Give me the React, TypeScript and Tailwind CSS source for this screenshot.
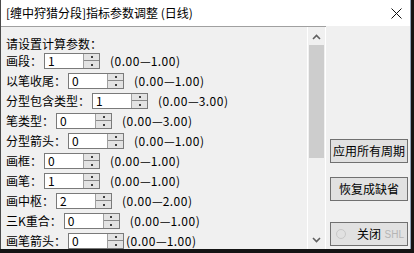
import React from "react";

const rows: [string, string, string, string][] = [
  ["画段：", "1", "(0.00", "1.00)"],
  ["以笔收尾：", "0", "(0.00", "1.00)"],
  ["分型包含类型：", "1", "(0.00", "3.00)"],
  ["笔类型：", "0", "(0.00", "3.00)"],
  ["分型箭头：", "0", "(0.00", "1.00)"],
  ["画框：", "0", "(0.00", "1.00)"],
  ["画笔：", "1", "(0.00", "1.00)"],
  ["画中枢：", "2", "(0.00", "2.00)"],
  ["三K重合：", "0", "(0.00", "1.00)"],
  ["画笔箭头：", "0", "(0.00", "1.00)"],
];

function Spin({ value }: { value: string }) {
  return (
    <div className="ml-[2px] h-[16px] flex border border-[#7a7a7a] shrink-0">
      <div className="w-[38px] bg-white pl-[3px] leading-[14px] text-[12px]">{value}</div>
      <div className="w-[16px] bg-[#e3e3e3] border-l border-[#a0a0a0] flex flex-col">
        <div className="h-[7px] border-b border-[#8a8a8a] flex items-center justify-center">
          <div className="w-[2px] h-[2px] bg-[#404040]" />
        </div>
        <div className="flex-1 flex items-center justify-center">
          <div className="w-[2px] h-[2px] bg-[#404040]" />
        </div>
      </div>
    </div>
  );
}

function Btn({ label, className, children }: { label: string; className: string; children?: React.ReactNode }) {
  return (
    <div
      className={`relative ml-[4px] w-[78px] h-[24px] border border-[#707070] bg-[#e1e1e1] flex items-center justify-center text-[12px] leading-none whitespace-nowrap ${className}`}
    >
      {label}
      {children}
    </div>
  );
}

export default function App() {
  return (
    <div className="w-[414px] h-[253px] bg-[#141414] overflow-hidden font-['Noto_Sans_CJK_SC',sans-serif] text-[12px] text-black">
      <div className="w-[411px] h-[249px] bg-[#f0f0f0] border-l border-l-[#4a4a4a] border-r border-r-[#8da2b8] flex flex-col overflow-hidden">
        <div className="h-[26px] bg-white flex items-center shrink-0">
          <span className="pl-[5px] text-[12px] leading-none whitespace-nowrap">[缠中狩猎分段]指标参数调整 (日线)</span>
          <svg className="ml-auto mr-[8px]" width="11" height="11" viewBox="0 0 11 11">
            <path d="M0.5 0.5 L10.5 10.5 M10.5 0.5 L0.5 10.5" stroke="#111" strokeWidth="1" fill="none" />
          </svg>
        </div>
        <div className="flex flex-1 min-h-0">
          <div className="w-[325px] flex border-t border-[#a0a0a0] overflow-hidden">
            <div className="flex-1 pt-[9px] overflow-hidden">
              <div className="h-[15px] leading-[15px] pl-[5px] whitespace-nowrap">请设置计算参数：</div>
              {rows.map(([label, v, a, b], i) => (
                <div key={i} className="h-[20px] flex items-center pl-[5px] whitespace-nowrap">
                  <span className="leading-none">{label}</span>
                  <Spin value={v} />
                  <span className={`${i === rows.length - 1 ? "ml-[2px]" : "ml-[10px]"} leading-none tracking-[0.5px]`}>
                    {a}
                    <span className="tracking-normal">—</span>
                    {b}
                  </span>
                </div>
              ))}
            </div>
            <div className="w-[19px] border-l border-r border-white bg-[#f0f0f0] flex flex-col items-center">
              <svg className="mt-[7px]" width="9" height="6" viewBox="0 0 9 6">
                <path d="M1 5 L4.5 1.5 L8 5" stroke="#606060" strokeWidth="1.6" fill="none" />
              </svg>
              <div className="mt-[5px] w-[15px] h-[113px] bg-[#cdcdcd]" />
              <div className="flex-1" />
              <svg className="mb-[6px]" width="9" height="6" viewBox="0 0 9 6">
                <path d="M1 1 L4.5 4.5 L8 1" stroke="#606060" strokeWidth="1.6" fill="none" />
              </svg>
            </div>
          </div>
          <div className="flex-1 flex flex-col">
            <Btn label="应用所有周期" className="mt-[113px]" />
            <Btn label="恢复成缺省" className="mt-[14px]" />
            <Btn label="关闭" className="mt-[21px]">
              <span className="absolute left-[5px] top-[6px] w-[10px] h-[10px] rounded-full border border-[#c8c8c8]" />
              <span className="absolute right-[3px] top-[7px] text-[10px] text-[#b5b5b5] font-['Liberation_Sans',sans-serif] leading-none">SHL</span>
            </Btn>
          </div>
        </div>
      </div>
    </div>
  );
}
